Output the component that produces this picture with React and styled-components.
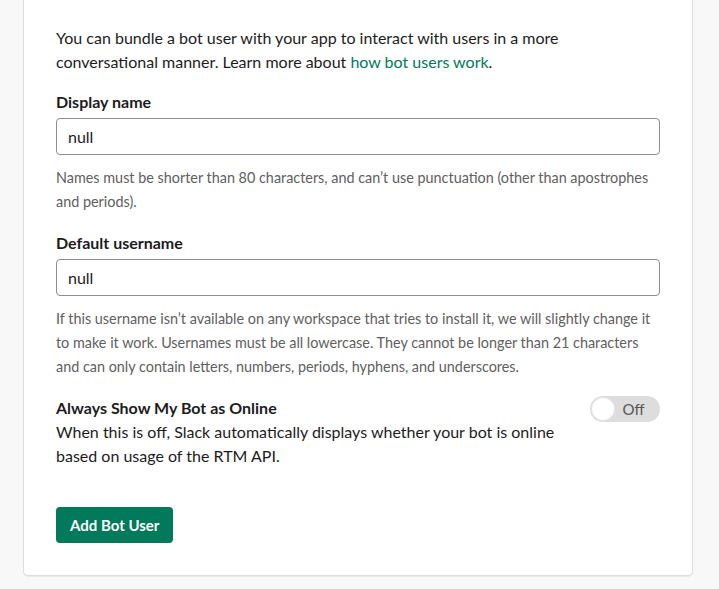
import React from "react";
import styled, { createGlobalStyle } from "styled-components";

const Global = createGlobalStyle`
  html, body { margin: 0; padding: 0; background: #f8f8f8; }
  body { font-family: Lato, "Noto Sans", sans-serif; color: #1d1c1d; -webkit-font-smoothing: antialiased; }
`;

const Page = styled.div`
  padding: 0 26px 12px 23px;
`;

const Card = styled.section`
  background: #fff;
  border: 1px solid #dddddd;
  border-top: none;
  border-radius: 0 0 5px 5px;
  box-shadow: 0 1px 0 rgba(0, 0, 0, 0.06);
  padding: 26px 32px 32px 32px;
`;

const Intro = styled.p`
  margin: 0 0 16px;
  font-size: 16px;
  line-height: 24px;
`;

const Link = styled.a`
  color: #007a5a;
  text-decoration: none;
`;

const Field = styled.div`
  display: flex;
  flex-direction: column;
  margin-bottom: 17px;
`;

const Label = styled.label`
  font-weight: 700;
  font-size: 16px;
  line-height: 24px;
  margin-bottom: 4px;
`;

const Input = styled.input`
  box-sizing: border-box;
  height: 37px;
  border: 1px solid #8d8d8d;
  border-radius: 4px;
  padding: 0 11px;
  font: 16px Lato, "Noto Sans", sans-serif;
  color: #1d1c1d;
  outline: none;
`;

const Help = styled.p`
  margin: 11px 0 0;
  font-size: 14.4px;
  line-height: 24px;
  color: #616061;
`;

const ToggleRow = styled.div`
  display: flex;
  justify-content: space-between;
  align-items: flex-start;
`;

const ToggleText = styled.div`
  max-width: 510px;
  font-size: 16px;
  line-height: 24px;
`;

const ToggleTitle = styled.div`
  font-weight: 700;
`;

const Switch = styled.div`
  box-sizing: border-box;
  width: 70px;
  height: 26px;
  border-radius: 13px;
  background: #dddddd;
  display: flex;
  align-items: center;
  padding: 1px;
`;

const Knob = styled.span`
  box-sizing: border-box;
  width: 24px;
  height: 24px;
  border-radius: 50%;
  background: #fff;
  border: 1px solid #e4e4e4;
`;

const SwitchLabel = styled.span`
  flex: 1;
  text-align: center;
  font-size: 15px;
  color: #555;
  padding-right: 7px;
`;

const Button = styled.button`
  margin-top: 39px;
  height: 36px;
  padding: 0 14px;
  border: none;
  border-radius: 4px;
  background: #007a5a;
  color: #fff;
  font: 700 15px Lato, "Noto Sans", sans-serif;
  cursor: pointer;
`;

export default function App() {
  return (
    <>
      <Global />
      <Page>
        <Card>
          <Intro>
            You can bundle a bot user with your app to interact with users in a more
            conversational manner. Learn more about <Link href="#">how bot users work</Link>.
          </Intro>
          <Field>
            <Label>Display name</Label>
            <Input defaultValue="null" />
            <Help>
              Names must be shorter than 80 characters, and can’t use punctuation (other than
              apostrophes and periods).
            </Help>
          </Field>
          <Field>
            <Label>Default username</Label>
            <Input defaultValue="null" />
            <Help>
              If this username isn’t available on any workspace that tries to install it, we will
              slightly change it to make it work. Usernames must be all lowercase. They cannot be
              longer than 21 characters and can only contain letters, numbers, periods, hyphens, and
              underscores.
            </Help>
          </Field>
          <ToggleRow>
            <ToggleText>
              <ToggleTitle>Always Show My Bot as Online</ToggleTitle>
              When this is off, Slack automatically displays whether your bot is online based on
              usage of the RTM API.
            </ToggleText>
            <Switch>
              <Knob />
              <SwitchLabel>Off</SwitchLabel>
            </Switch>
          </ToggleRow>
          <Button>Add Bot User</Button>
        </Card>
      </Page>
    </>
  );
}
